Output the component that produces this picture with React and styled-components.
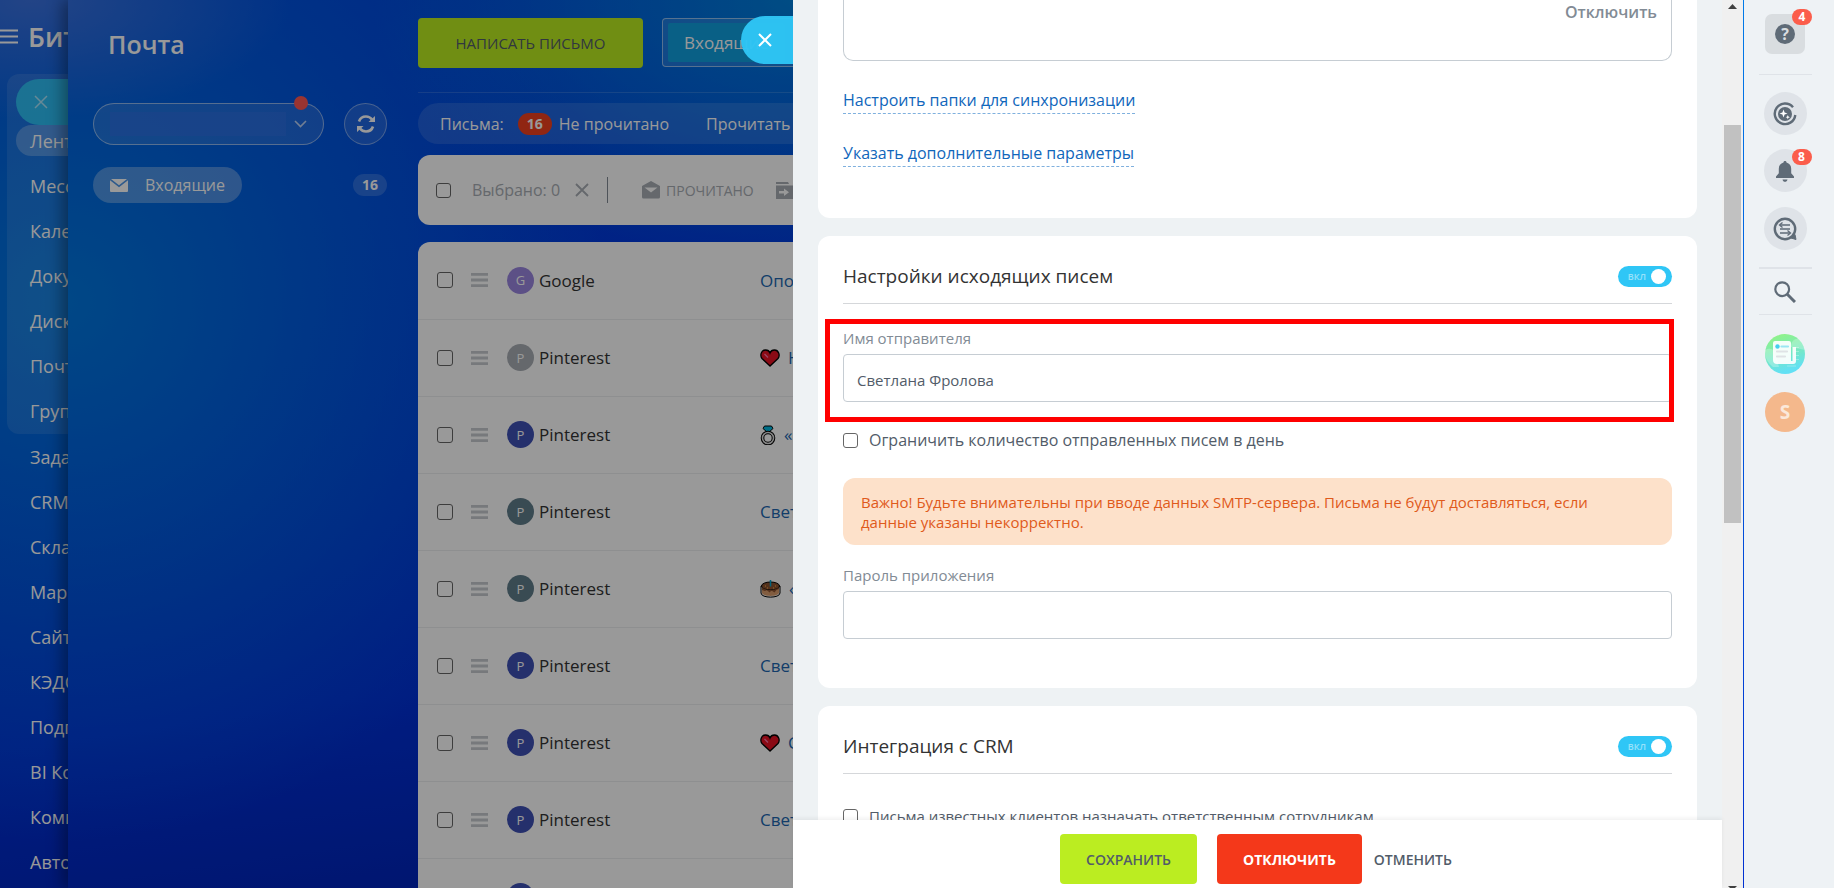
import React from 'react';
import styled, { createGlobalStyle } from 'styled-components';

const GlobalStyle = createGlobalStyle`
  * {
    box-sizing: border-box;
  }

  body {
    margin: 0;
    font-family: "Open Sans", "Noto Sans", sans-serif;
    font-size: 18px;
    color: #333;
  }

  button, input {
    font-family: inherit;
  }

  a {
    text-decoration: none;
  }

  svg {
    flex-shrink: 0;
  }
`;

const groupItems = ['Лента', 'Мессенджер', 'Календарь', 'Документы', 'Диск', 'Почта', 'Группы'];
const menuItems = ['Задачи', 'CRM', 'Склад', 'Маркетинг', 'Сайты', 'КЭДО', 'Подпись', 'BI Конструктор', 'Компания', 'Автоматизация'];

const mails = [
  { id: 1, letter: 'G', color: '#9a85e0', from: 'Google', subject: 'Оповещение' },
  { id: 2, letter: 'P', color: '#a8adb4', from: 'Pinterest', icon: 'heart', subject: 'Новые идеи' },
  { id: 3, letter: 'P', color: '#3f51b5', from: 'Pinterest', icon: 'ring', subject: '«Кольца»' },
  { id: 4, letter: 'P', color: '#607d8b', from: 'Pinterest', subject: 'Светлана' },
  { id: 5, letter: 'P', color: '#607d8b', from: 'Pinterest', icon: 'cake', subject: '«Торты»' },
  { id: 6, letter: 'P', color: '#3f51b5', from: 'Pinterest', subject: 'Светлана' },
  { id: 7, letter: 'P', color: '#3f51b5', from: 'Pinterest', icon: 'heart', subject: 'Светлана' },
  { id: 8, letter: 'P', color: '#3f51b5', from: 'Pinterest', subject: 'Светлана' },
  { id: 9, letter: 'P', color: '#3f51b5', from: 'Pinterest', subject: 'Светлана' },
];

const CrossIcon = ({ size = 14, width = 2 }) => (
  <svg width={size} height={size} viewBox="0 0 14 14" fill="none" stroke="currentColor" strokeWidth={width}>
    <path d="M1 1l12 12M13 1L1 13" />
  </svg>
);

const BurgerIcon = ({ width, height, stroke }) => (
  <svg width={width} height={height} viewBox="0 0 18 15" preserveAspectRatio="none" stroke="currentColor" strokeWidth={stroke}>
    <path d="M0 1.5h18M0 7.5h18M0 13.5h18" />
  </svg>
);

const ChevronIcon = () => (
  <svg width="13" height="8" viewBox="0 0 13 8" fill="none" stroke="currentColor" strokeWidth="1.6" opacity=".7">
    <path d="M1 1l5.500 5.500L12 1" />
  </svg>
);

const RefreshIcon = () => (
  <svg width="20" height="20" viewBox="0 0 20 20" fill="none" stroke="currentColor" strokeWidth="2.600">
    <path d="M3 7.500C4 4.500 6.500 2.500 10 2.500c2.500 0 4.500 1 6 3" />
    <path d="M17 12.500c-1 3-3.500 5-7 5-2.500 0-4.500-1-6-3" />
    <path d="M19 2v6h-6.500zM1 18v-6h6.500z" fill="currentColor" stroke="none" />
  </svg>
);

const EnvelopeIcon = () => (
  <svg width="18" height="13" viewBox="0 0 18 13" fill="currentColor">
    <path d="M1 0h16L9 6.200zM0 1.300l9 7 9-7V12a1 1 0 0 1-1 1H1a1 1 0 0 1-1-1z" />
  </svg>
);

const OpenEnvelopeIcon = () => (
  <svg width="18" height="18" viewBox="0 0 18 18" fill="currentColor">
    <path fillRule="evenodd" d="M9 0l9 5v11a1.500 1.500 0 0 1-1.500 1.500h-15A1.500 1.500 0 0 1 0 16V5zM2.500 6.500L9 11.500l6.500-5z" />
  </svg>
);

const FolderIcon = () => (
  <svg width="20" height="17" viewBox="0 0 20 17" fill="currentColor">
    <path d="M0 0h12l1 2H0z" />
    <path fillRule="evenodd" d="M0 3.500h20V17H0zM3 9v2.500h5V14l5-3.800-5-3.700V9z" />
  </svg>
);

const HeartIcon = () => (
  <svg width="20" height="18" viewBox="0 0 20 18">
    <path d="M10 17L2 9.500C-.5 6 1.500 1 5.500 1 8 1 9.500 2.500 10 4c.5-1.500 2-3 4.500-3 4 0 6 5 3.500 8.500z" fill="#e81224" stroke="#000" strokeWidth="1.300" />
    <path d="M4.500 5l3.500 3.500" stroke="#f7a" strokeWidth="1.200" />
  </svg>
);

const RingIcon = () => (
  <svg width="16" height="20" viewBox="0 0 16 20">
    <path d="M4.500 1h7l1.500 2.500-5 4.500-5-4.500z" fill="#00b7e0" stroke="#000" />
    <circle cx="8" cy="13" r="5.500" fill="none" stroke="#000" strokeWidth="3.600" />
    <circle cx="8" cy="13" r="5.500" fill="none" stroke="#ddd" strokeWidth="1.600" />
  </svg>
);

const CakeIcon = () => (
  <svg width="21" height="18" viewBox="0 0 21 18">
    <path d="M1 6v7c0 5.500 19 5.500 19 0V6z" fill="#fff" stroke="#000" />
    <path d="M2 6v6.500c0 4.500 17 4.500 17 0V6z" fill="#d99b6c" />
    <ellipse cx="10.500" cy="6" rx="9" ry="4" fill="#8a5230" stroke="#000" />
    <path d="M2 7v3l3 1 2-1 2.500 2.500 2-2 3 2 2-2.500 2.500-1V7c-2 4-15 4-17 0z" fill="#8a5230" />
    <path d="M10.500 0v6.500" stroke="#00a7d0" strokeWidth="1.500" />
    <path d="M5 6h1M15 6h1M7 8h1M13 8h1" stroke="#f8b040" />
  </svg>
);

const subjectIcons = { heart: HeartIcon, ring: RingIcon, cake: CakeIcon };

const AssistantIcon = () => (
  <svg width="24" height="24" viewBox="0 0 24 24">
    <path d="M20 5.200A10.300 10.300 0 1 0 22.300 13" fill="none" stroke="#5f6b77" strokeWidth="2.400" />
    <circle cx="12" cy="12" r="7" fill="#5f6b77" />
    <path d="M10.500 7.500l1.100 2.900 2.900 1.100-2.900 1.100-1.100 2.900-1.100-2.900-2.900-1.100 2.900-1.100zM14.800 13l.6 1.600 1.600.6-1.600.6-.6 1.600-.6-1.600-1.600-.6 1.600-.6z" fill="#fff" />
  </svg>
);

const BellIcon = () => (
  <svg width="20" height="22" viewBox="0 0 20 22" fill="#5f6b77">
    <path d="M10 1c.9 0 1.500.6 1.500 1.400 3 .8 4.700 3.200 4.700 6.300v4.500l2.800 3.300V18H1v-1.500l2.800-3.300V8.700c0-3.100 1.700-5.500 4.700-6.300C8.500 1.600 9.100 1 10 1zM7.500 19.500h5c-.3 1.500-1.300 2.300-2.500 2.300s-2.200-.8-2.500-2.300z" />
  </svg>
);

const ChatIcon = () => (
  <svg width="24" height="24" viewBox="0 0 24 24" fill="none" stroke="#5f6b77">
    <circle cx="12" cy="12" r="10.200" strokeWidth="2.400" />
    <path d="M18 21l5 1.500-1-5z" fill="#5f6b77" />
    <path d="M7 8h10M7 12h10M7 16h10" strokeWidth="1.600" />
    <path d="M9.500 5.500L6.500 8l3 2.500M14.500 13.500l3 2.500-3 2.500" strokeWidth="1.300" />
  </svg>
);

const SearchIcon = () => (
  <svg width="22" height="22" viewBox="0 0 22 22" fill="none" stroke="#5f6b77">
    <circle cx="8.200" cy="8.200" r="6.900" strokeWidth="2.200" />
    <path d="M13 13l8 8" strokeWidth="3" />
  </svg>
);

const NewsIcon = () => (
  <svg width="40" height="40" viewBox="0 0 40 40">
    <defs>
      <linearGradient id="news" x1="0" y1="0" x2=".3" y2="1">
        <stop offset="0" stopColor="#95f57c" />
        <stop offset="1" stopColor="#62e0f4" />
      </linearGradient>
    </defs>
    <circle cx="20" cy="20" r="20" fill="url(#news)" />
    <path d="M0 16c6-3 8 0 10 2l4 15H8A20 20 0 0 1 0 20zM26 13c0-6 4-9 8-8 3 3 5 7 6 11z" fill="#fff" opacity=".25" />
    <path d="M30 13.500h4M30 17.500h4M30 21.500h4M30 25.500h4M22 32h9" stroke="#fff" opacity=".3" />
    <path d="M10 7h14a2 2 0 0 1 2 2v18h1.500V13H31v14a3 3 0 0 1-3 3H12a4 4 0 0 1-4-4V9a2 2 0 0 1 2-2z" fill="#fff" opacity=".92" />
    <circle cx="12.500" cy="12.500" r="2.200" fill="#46cfee" />
    <path d="M16.500 12.500h6.500" stroke="#9be7f2" strokeWidth="2.200" strokeLinecap="round" />
    <path d="M12 17.500h10M12 22.500h8" stroke="#dfe3e6" strokeWidth="2.200" strokeLinecap="round" />
  </svg>
);

const Page = styled.div`
  display: flex;
  height: 100vh;
  overflow: hidden;
  background: linear-gradient(#007ae8, #0030d0);
`;

/* everything under the slider panel */
const Backdrop = styled.div`
  position: relative;
  display: flex;
  flex: 793 1 0;
  min-width: 0;
  overflow: hidden;
  color: #fff;
  background:
    radial-gradient(ellipse 260px 120px at 4% 0, #3a72e0 0, transparent 100%),
    radial-gradient(ellipse 420px 260px at 100% 0, #0080dd 0, transparent 100%),
    radial-gradient(ellipse 540px 540px at 8% 34%, #0078e0 0, #006ce0aa 45%, transparent 100%),
    linear-gradient(172deg, #0044e0 0, #0038dd 40%, #0030d8 75%, #0022b4 100%);

  &::after {
    content: "";
    position: absolute;
    inset: 0;
    background: rgba(0, 0, 0, 0.4);
    pointer-events: none;
  }
`;

const Menu = styled.nav`
  position: relative;
  flex: 0 0 68px;
  overflow: hidden;
  padding-top: 16px;
  white-space: nowrap;
`;

const MenuHead = styled.div`
  display: flex;
  align-items: center;
  gap: 10px;
  height: 40px;
  margin-bottom: 18px;
  font-size: 27px;
  font-weight: 600;
`;

const MenuGroup = styled.div`
  width: 240px;
  height: 360px;
  margin-left: 7px;
  padding: 51px 9px 0;
  border-radius: 12px;
  background: rgba(255, 255, 255, 0.1);
`;

const MenuLink = styled.a`
  display: flex;
  align-items: center;
  height: 31px;
  margin-bottom: 14px;
  padding-left: 14px;
  border-radius: 16px;
  font-size: 18px;
  color: #fff;
  background: ${props => props.$active ? 'rgba(255, 255, 255, 0.25)' : 'none'};
`;

const MenuList = styled.div`
  padding: 7px 16px;
`;

const MenuClose = styled.button`
  position: absolute;
  top: 79px;
  left: 16px;
  width: 60px;
  height: 46px;
  padding: 4px 18px 0;
  border: 0;
  border-radius: 23px 0 0 23px;
  text-align: left;
  color: rgba(255, 255, 255, 0.6);
  background: rgba(47, 198, 246, 0.9);
`;

const Mail = styled.div`
  display: flex;
  flex: 1;
  min-width: 0;
  box-shadow: -6px 0 14px rgba(0, 0, 0, 0.35);
  z-index: 0;
`;

const Sidebar = styled.aside`
  flex: 0 0 350px;
  padding: 26px 31px 0 25px;
`;

const SidebarTitle = styled.h1`
  margin: 0 0 41px 15px;
  font-size: 25px;
  line-height: 36px;
  font-weight: 600;
`;

const SidebarRow = styled.div`
  display: flex;
  align-items: center;
  justify-content: space-between;
  margin-bottom: 22px;
`;

const AccountButton = styled.button`
  position: relative;
  display: flex;
  align-items: center;
  justify-content: flex-end;
  width: 231px;
  height: 42px;
  padding: 0 16px;
  border: 1px solid rgba(255, 255, 255, 0.5);
  border-radius: 21px;
  color: #fff;
  background: rgba(255, 255, 255, 0.12);
`;

const AccountMask = styled.span`
  flex: 1;
  height: 24px;
  margin-right: 8px;
  background: #2c70e4;
  opacity: 0.7;
`;

const RedDot = styled.i`
  position: absolute;
  top: -8px;
  right: 15px;
  width: 14px;
  height: 14px;
  border-radius: 50%;
  background: #ff5752;
`;

const RoundButton = styled.button`
  display: flex;
  align-items: center;
  justify-content: center;
  width: 43px;
  height: 42px;
  padding: 0;
  border: 1px solid rgba(255, 255, 255, 0.4);
  border-radius: 50%;
  color: #fff;
  background: rgba(255, 255, 255, 0.12);
`;

const FolderLink = styled.a`
  display: flex;
  align-items: center;
  gap: 17px;
  height: 36px;
  padding: 0 17px;
  border-radius: 18px;
  font-size: 16px;
  color: #fff;
  background: rgba(255, 255, 255, 0.3);
`;

const Counter = styled.span`
  display: inline-block;
  padding: 0 9px;
  border-radius: 11px;
  font-size: 14px;
  font-weight: 700;
  line-height: 22px;
  background: ${props => props.$red ? '#f0401f' : 'rgba(255, 255, 255, 0.17)'};
`;

const Main = styled.main`
  flex: 1;
  min-width: 0;
  overflow: hidden;
  padding-top: 18px;
  white-space: nowrap;
`;

const Toolbar = styled.div`
  display: flex;
  gap: 19px;
  width: 900px;
  padding-bottom: 24px;
  border-bottom: 1px solid rgba(255, 255, 255, 0.15);
`;

const ComposeButton = styled.button`
  width: 225px;
  height: 50px;
  border: 0;
  border-radius: 4px;
  font-size: 15px;
  font-weight: 500;
  text-transform: uppercase;
  color: #525c69;
  background: #bbed21;
`;

const FilterBox = styled.div`
  flex: 1;
  height: 49px;
  padding: 4px 5px;
  border: 1px solid rgba(255, 255, 255, 0.5);
  border-radius: 4px;
  background: rgba(255, 255, 255, 0.12);
`;

const FilterChip = styled.span`
  display: inline-block;
  padding: 0 16px;
  border-radius: 2px;
  font-size: 17px;
  line-height: 39px;
  background: #0fa0e0;
`;

const StatusBar = styled.div`
  display: flex;
  align-items: center;
  width: 900px;
  height: 41px;
  margin: 10px 0 11px;
  padding-left: 22px;
  border-radius: 21px;
  font-size: 16px;
  background: rgba(255, 255, 255, 0.12);
`;

const StatusLabel = styled.span`
  margin-right: 14px;
`;

const StatusLink = styled.a`
  margin: 0 30px 0 7px;
  color: #fff;
`;

const ActionBar = styled.div`
  display: flex;
  align-items: center;
  width: 900px;
  height: 70px;
  margin-bottom: 17px;
  padding-left: 18px;
  border-radius: 12px;
  color: #a8adb4;
  background: #fff;
`;

const CheckBox = styled.input.attrs({ type: 'checkbox' })`
  appearance: none;
  flex: 0 0 auto;
  width: ${props => props.$size || 15}px;
  height: ${props => props.$size || 15}px;
  margin: 0;
  border: 1px solid #666;
  border-radius: 3px;
  background: #fff;
`;

const Selected = styled.span`
  display: flex;
  align-items: center;
  gap: 15px;
  height: 26px;
  margin-left: 21px;
  padding-right: 18px;
  border-right: 1px solid #828b95;
  font-size: 16px;
`;

const ActionButton = styled.button`
  display: flex;
  align-items: center;
  gap: 6px;
  margin-left: ${props => props.$gap}px;
  padding: 0;
  border: 0;
  font-size: 14px;
  text-transform: uppercase;
  color: inherit;
  background: none;
`;

const MailTable = styled.table`
  width: 900px;
  table-layout: fixed;
  border-collapse: collapse;
  border-radius: 12px 12px 0 0;
  color: #333;
  background: #fff;

  tr {
    height: 77px;
    border-bottom: 1px solid #edeef0;
  }

  td {
    padding: 0;
  }
`;

const CheckCell = styled.td`
  width: 53px;

  input {
    display: block;
    margin-left: 19px;
  }
`;

const DragCell = styled.td`
  width: 36px;
  color: #c6cacf;

  svg {
    display: block;
  }
`;

const FromCell = styled.td`
  width: 253px;
`;

const Sender = styled.div`
  display: flex;
  align-items: center;
  gap: 5px;
  font-size: 17px;
  font-weight: 500;
`;

const Avatar = styled.span`
  display: flex;
  align-items: center;
  justify-content: center;
  width: ${props => props.$size || 27}px;
  height: ${props => props.$size || 27}px;
  border-radius: 50%;
  font-size: 13px;
  color: #fff;
  background: ${props => props.$color};
`;

const Subject = styled.a`
  display: flex;
  align-items: center;
  gap: 8px;
  font-weight: 500;
  font-size: 17px;
  color: #2067b0;
`;

const Panel = styled.section`
  position: relative;
  display: flex;
  flex: 950 1 0;
  min-width: 0;
  margin-right: 1px;
  background: #eef2f4;
`;

const PanelClose = styled.button`
  position: absolute;
  top: 16px;
  left: -52px;
  width: 52px;
  height: 48px;
  padding: 0 20px 0 16px;
  border: 0;
  border-radius: 24px 0 0 24px;
  line-height: 0;
  color: #fff;
  background: rgba(47, 198, 246, 0.96);
`;

const PanelBody = styled.form`
  display: flex;
  flex: 1;
  flex-direction: column;
  min-width: 0;
`;

const PanelScroll = styled.div`
  flex: 1;
  min-height: 0;
  overflow: hidden;
  padding: 0 25px;
`;

const Card = styled.div`
  margin-bottom: 18px;
  padding: 0 25px ${props => props.$cut ? 24 : 49}px;
  border-radius: ${props => props.$cut ? '0 0 12px 12px' : '12px'};
  background: #fff;
`;

const AccountBox = styled.div`
  display: flex;
  justify-content: flex-end;
  height: 61px;
  margin-bottom: 27px;
  padding-right: 14px;
  border: solid #c6cdd3;
  border-width: 0 1px 1px;
  border-radius: 0 0 10px 10px;
`;

const GrayLink = styled.a`
  font-size: 16px;
  font-weight: 600;
  line-height: 24px;
  color: #828b95;
`;

const DashedLink = styled.a`
  display: table;
  margin-bottom: 27px;
  padding-bottom: 1px;
  border-bottom: 1px dashed #7fb0de;
  font-size: 16px;
  line-height: 24px;
  color: #1066bb;
`;

const CardHead = styled.div`
  display: flex;
  align-items: center;
  justify-content: space-between;
  height: 68px;
  padding-top: 13px;
  border-bottom: 1px solid #d5d7da;
`;

const CardTitle = styled.h2`
  margin: 0;
  font-size: 19px;
  font-weight: 400;
  line-height: 24px;
`;

const Toggle = styled.button`
  display: flex;
  align-items: center;
  justify-content: flex-end;
  gap: 5px;
  width: 54px;
  height: 21px;
  padding: 0 6px;
  border: 0;
  border-radius: 11px;
  font-size: 9px;
  font-weight: 600;
  color: rgba(255, 255, 255, 0.5);
  background: #2fc6f6;

  &::after {
    content: "";
    width: 15px;
    height: 15px;
    border-radius: 50%;
    background: #fff;
  }
`;

const Field = styled.div`
  position: relative;
  margin-top: ${props => props.$top}px;
`;

const FieldLabel = styled.label`
  display: block;
  margin-bottom: 6px;
  font-size: 15px;
  line-height: 20px;
  color: #828b95;
`;

const TextInput = styled.input`
  display: block;
  width: 100%;
  height: 48px;
  padding: 4px 13px 0;
  border: 1px solid #c6cdd3;
  border-radius: 4px;
  font-size: 15px;
  color: #525c69;
  outline: none;
`;

const Highlight = styled.div`
  position: absolute;
  top: -9px;
  right: -2px;
  bottom: -20px;
  left: -18px;
  border: 5px solid #f00;
  pointer-events: none;
`;

const CheckLabel = styled.label`
  display: flex;
  align-items: center;
  gap: 11px;
  margin-top: ${props => props.$top}px;
  font-size: ${props => props.$small ? 15 : 16}px;
  line-height: 24px;
  color: #525c69;
`;

const Alert = styled.div`
  margin-top: 26px;
  padding: 14px 60px 13px 18px;
  border-radius: 12px;
  font-size: 15px;
  line-height: 20px;
  color: #e05a1b;
  background: #fde1ca;
`;

const Footer = styled.div`
  display: flex;
  align-items: center;
  justify-content: center;
  gap: 20px;
  height: 68px;
  padding: 10px 3px 0 0;
  box-shadow: 0 -2px 4px rgba(0, 0, 0, 0.06);
  background: #fff;
  z-index: 1;
`;

const FooterButton = styled.button`
  height: 50px;
  padding: 0 26px;
  border: 0;
  border-radius: 4px;
  font-size: 14px;
  font-weight: ${props => props.$danger ? 700 : 600};
  text-transform: uppercase;
  color: ${props => props.$danger ? '#fff' : '#525c69'};
  background: ${props => props.$danger ? '#f4381a' : '#bbed21'};
`;

const CancelLink = styled.a`
  margin-left: -8px;
  font-size: 14px;
  font-weight: 600;
  text-transform: uppercase;
  color: #525c69;
`;

const ScrollBar = styled.div`
  display: flex;
  flex: 0 0 21px;
  flex-direction: column;
  align-items: center;
  justify-content: space-between;
  padding-top: 4px;
  background: #f0f0f0;
`;

const ScrollThumb = styled.div`
  flex: 0 0 398px;
  width: 17px;
  margin: 116px 0 auto;
  background: #c1c1c1;
`;

const Rail = styled.aside`
  display: flex;
  flex: 0 0 90px;
  flex-direction: column;
  align-items: center;
  padding: 14px 8px 0 0;
  background: #eef2f5;
`;

const RailButton = styled.button`
  position: relative;
  display: flex;
  align-items: center;
  justify-content: center;
  width: ${props => props.$square ? 40 : 43}px;
  height: ${props => props.$square ? 40 : 43}px;
  margin-bottom: ${props => props.$gap}px;
  padding: 0;
  border: 0;
  border-radius: ${props => props.$square ? '7px' : '50%'};
  background: ${props => props.$square ? '#d9dde0' : '#dfe3e8'};
`;

const PlainButton = styled.button`
  display: block;
  height: ${props => props.$height}px;
  margin-bottom: ${props => props.$gap}px;
  padding: 0;
  border: 0;
  line-height: 0;
  background: none;
`;

const Question = styled.span`
  width: 20px;
  border-radius: 50%;
  font-size: 16px;
  font-weight: 700;
  line-height: 20px;
  color: #d9dde0;
  background: #5f6b77;
`;

const Badge = styled.span`
  position: absolute;
  top: ${props => props.$top}px;
  right: ${props => props.$right}px;
  width: 20px;
  border-radius: 8px;
  font-size: 12px;
  font-weight: 700;
  line-height: 16px;
  color: #fff;
  background: #fb5d4b;
`;

const Divider = styled.hr`
  width: 53px;
  height: ${props => props.$height || 1}px;
  margin: 0 0 ${props => props.$gap}px;
  border: 0;
  background: #dfe3e8;
`;

const RailAvatar = styled(Avatar)`
  font-size: 19px;
  font-weight: 700;
  color: #fbe8da;
`;

const MailRow = ({ mail }) => {
  const Icon = subjectIcons[mail.icon];
  return (
    <tr>
      <CheckCell><CheckBox $size={16} aria-label={mail.from} /></CheckCell>
      <DragCell><BurgerIcon width={17} height={14} stroke={3} /></DragCell>
      <FromCell>
        <Sender>
          <Avatar $color={mail.color}>{mail.letter}</Avatar>
          <span>{mail.from}</span>
        </Sender>
      </FromCell>
      <td>
        <Subject href="#mail">
          {Icon && <Icon />}
          <span>{mail.subject}</span>
        </Subject>
      </td>
    </tr>
  );
};

const Section = ({ title, children }) => (
  <Card>
    <CardHead>
      <CardTitle>{title}</CardTitle>
      <Toggle type="button" role="switch" aria-checked="true" aria-label={title}>ВКЛ</Toggle>
    </CardHead>
    {children}
  </Card>
);

const App = () => (
  <Page>
    <GlobalStyle />
    <Backdrop>
      <Menu>
        <MenuHead>
          <BurgerIcon width={18} height={15} stroke={1.8} />
          <span>Битрикс24</span>
        </MenuHead>
        <MenuGroup>
          {groupItems.map((item, i) => (
            <MenuLink key={item} href="#menu" $active={i === 0}>{item}</MenuLink>
          ))}
        </MenuGroup>
        <MenuList>
          {menuItems.map(item => (
            <MenuLink key={item} href="#menu">{item}</MenuLink>
          ))}
        </MenuList>
        <MenuClose type="button" aria-label="Закрыть"><CrossIcon width={1.5} /></MenuClose>
      </Menu>
      <Mail>
        <Sidebar>
          <SidebarTitle>Почта</SidebarTitle>
          <SidebarRow>
            <AccountButton type="button" aria-label="Почтовый ящик">
              <AccountMask />
              <ChevronIcon />
              <RedDot />
            </AccountButton>
            <RoundButton type="button" aria-label="Обновить"><RefreshIcon /></RoundButton>
          </SidebarRow>
          <SidebarRow>
            <FolderLink href="#inbox"><EnvelopeIcon />Входящие</FolderLink>
            <Counter>16</Counter>
          </SidebarRow>
        </Sidebar>
        <Main>
          <Toolbar>
            <ComposeButton type="button">Написать письмо</ComposeButton>
            <FilterBox><FilterChip>Входящие</FilterChip></FilterBox>
          </Toolbar>
          <StatusBar>
            <StatusLabel>Письма:</StatusLabel>
            <Counter $red>16</Counter>
            <StatusLink href="#unread">Не прочитано</StatusLink>
            <StatusLink href="#read-all">Прочитать все</StatusLink>
          </StatusBar>
          <ActionBar>
            <CheckBox aria-label="Выбрать все" />
            <Selected>Выбрано: 0 <CrossIcon width={1.8} /></Selected>
            <ActionButton type="button" $gap={34}><OpenEnvelopeIcon />Прочитано</ActionButton>
            <ActionButton type="button" $gap={22}><FolderIcon />В папку</ActionButton>
          </ActionBar>
          <MailTable>
            <tbody>
              {mails.map(mail => <MailRow key={mail.id} mail={mail} />)}
            </tbody>
          </MailTable>
        </Main>
      </Mail>
    </Backdrop>
    <Panel>
      <PanelClose type="button" aria-label="Закрыть"><CrossIcon /></PanelClose>
      <PanelBody>
        <PanelScroll>
          <Card $cut>
            <AccountBox><GrayLink href="#off">Отключить</GrayLink></AccountBox>
            <DashedLink href="#folders">Настроить папки для синхронизации</DashedLink>
            <DashedLink href="#params">Указать дополнительные параметры</DashedLink>
          </Card>
          <Section title="Настройки исходящих писем">
            <Field $top={24}>
              <FieldLabel htmlFor="sender">Имя отправителя</FieldLabel>
              <TextInput id="sender" type="text" defaultValue="Светлана Фролова" />
              <Highlight />
            </Field>
            <CheckLabel $top={26}>
              <CheckBox />
              Ограничить количество отправленных писем в день
            </CheckLabel>
            <Alert>
              Важно! Будьте внимательны при вводе данных SMTP-сервера. Письма не будут доставляться, если данные указаны некорректно.
            </Alert>
            <Field $top={20}>
              <FieldLabel htmlFor="password">Пароль приложения</FieldLabel>
              <TextInput id="password" type="password" />
            </Field>
          </Section>
          <Section title="Интеграция с CRM">
            <CheckLabel $top={30} $small>
              <CheckBox />
              Письма известных клиентов назначать ответственным сотрудникам
            </CheckLabel>
          </Section>
        </PanelScroll>
        <Footer>
          <FooterButton type="submit">Сохранить</FooterButton>
          <FooterButton type="button" $danger>Отключить</FooterButton>
          <CancelLink href="#cancel">Отменить</CancelLink>
        </Footer>
      </PanelBody>
      <ScrollBar>
        <svg width="9" height="5" viewBox="0 0 9 5" fill="#404040"><path d="M0 5L4.500 0 9 5z" /></svg>
        <ScrollThumb />
        <svg width="9" height="2" viewBox="0 0 9 2" fill="#404040"><path d="M0 0h9L7 2H2z" /></svg>
      </ScrollBar>
    </Panel>
    <Rail>
      <RailButton type="button" $square $gap={20} aria-label="Помощь">
        <Question>?</Question>
        <Badge $top={-5} $right={-7}>4</Badge>
      </RailButton>
      <Divider $gap={17} />
      <RailButton type="button" $gap={14} aria-label="Ассистент"><AssistantIcon /></RailButton>
      <RailButton type="button" $gap={15} aria-label="Уведомления">
        <BellIcon />
        <Badge $top={0} $right={-5}>8</Badge>
      </RailButton>
      <RailButton type="button" $gap={17} aria-label="Чаты"><ChatIcon /></RailButton>
      <Divider $height={2} $gap={12} />
      <PlainButton type="button" $height={22} $gap={11} aria-label="Поиск"><SearchIcon /></PlainButton>
      <Divider $gap={19} />
      <PlainButton type="button" $height={40} $gap={18} aria-label="Новости"><NewsIcon /></PlainButton>
      <RailAvatar $size={40} $color="#f4b88c">S</RailAvatar>
    </Rail>
  </Page>
);

export default App;
